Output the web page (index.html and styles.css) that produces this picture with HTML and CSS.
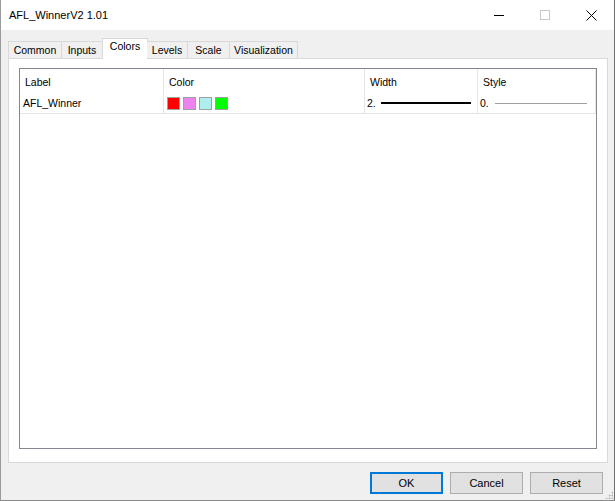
FILE: index.html
```html
<!DOCTYPE html>
<html lang="en">
<head>
    <meta charset="UTF-8">
    <title>AFL_WinnerV2 1.01</title>
    <link rel="stylesheet" href="styles.css">
</head>
<body>

<div class="window">
    <div class="titlebar">
        <span class="title">AFL_WinnerV2 1.01</span>
        <div class="controls">
            <span class="ctl"><svg width="10" height="10" viewBox="0 0 10 10"><line x1="0" y1="5.5" x2="10" y2="5.5" stroke="#000" stroke-width="1"/></svg></span>
            <span class="ctl"><svg width="10" height="10" viewBox="0 0 10 10"><rect x="0.5" y="0.5" width="9" height="9" fill="none" stroke="#c8c8c8" stroke-width="1"/></svg></span>
            <span class="ctl"><svg width="11" height="11" viewBox="0 0 11 11"><path d="M0.5 0.5 L10.5 10.5 M10.5 0.5 L0.5 10.5" stroke="#000" stroke-width="1"/></svg></span>
        </div>
    </div>

    <div class="content">
        <div class="tabs">
            <div class="tab">Common</div>
            <div class="tab">Inputs</div>
            <div class="tab active">Colors</div>
            <div class="tab">Levels</div>
            <div class="tab">Scale</div>
            <div class="tab">Visualization</div>
        </div>

        <div class="panel">
            <div class="listview">
                <div class="lv-row lv-head">
                    <div class="cell">Label</div>
                    <div class="cell">Color</div>
                    <div class="cell">Width</div>
                    <div class="cell">Style</div>
                </div>
                <div class="lv-row lv-item">
                    <div class="cell">AFL_Winner</div>
                    <div class="cell swatches">
                        <span class="swatch" style="background:#ff0000"></span>
                        <span class="swatch" style="background:#ee82ee"></span>
                        <span class="swatch" style="background:#afeeee"></span>
                        <span class="swatch" style="background:#00ff00"></span>
                    </div>
                    <div class="cell line-cell"><span>2.</span><span class="line thick"></span></div>
                    <div class="cell line-cell"><span>0.</span><span class="line thin"></span></div>
                </div>
            </div>
        </div>

        <div class="buttons">
            <button class="btn default">OK</button>
            <button class="btn">Cancel</button>
            <button class="btn">Reset</button>
        </div>
        <div class="grip"></div>
    </div>
</div>

</body>
</html>
```

FILE: styles.css
```css
body {
    margin: 0;
    padding: 0;
    font-family: "Liberation Sans", Arial, sans-serif;
    font-size: 10.5px;
    color: #000;
    background: #fff;
}
.window {
    width: 615px;
    height: 501px;
    box-sizing: border-box;
    border-left: 1px solid #9a9a9a;
    border-right: 1px solid #6e6e6e;
    border-bottom: 1px solid #8a8a8a;
    display: flex;
    flex-direction: column;
}
.titlebar {
    height: 30px;
    background: #fff;
    display: flex;
    align-items: center;
    justify-content: space-between;
    padding-left: 8px;
}
.title {
    font-size: 11px;
}
.controls {
    display: flex;
    height: 30px;
}
.ctl {
    width: 46px;
    display: flex;
    align-items: center;
    justify-content: center;
}
.content {
    flex: 1;
    background: #f0f0f0;
    padding: 8px 0 0 7px;
    display: flex;
    flex-direction: column;
    position: relative;
}
.tabs {
    display: flex;
    align-items: flex-end;
    height: 20px;
    position: relative;
    z-index: 1;
}
.tab {
    height: 17px;
    box-sizing: border-box;
    border: 1px solid #d9d9d9;
    border-bottom: none;
    border-left: none;
    padding-top: 1px;
    background: #f0f0f0;
    line-height: 15px;
    text-align: center;
}
.tab:nth-child(1) { width: 54px; border-left: 1px solid #d9d9d9; }
.tab:nth-child(2) { width: 41px; }
.tab:nth-child(3) { width: 46px; }
.tab:nth-child(4) { width: 41px; }
.tab:nth-child(5) { width: 42px; }
.tab:nth-child(6) { width: 68px; }
.tab.active {
    height: 21px;
    margin-bottom: -1px;
    margin-left: -1px;
    margin-right: -1px;
    background: #fff;
    border-left: 1px solid #d9d9d9;
    padding-top: 0;
}
.panel {
    width: 600px;
    height: 405px;
    box-sizing: border-box;
    border: 1px solid #d9d9d9;
    background: #fff;
    padding: 9px 0 0 10px;
}
.listview {
    width: 578px;
    height: 381px;
    box-sizing: border-box;
    border: 1px solid #828790;
    background: #fff;
}
.lv-row {
    display: grid;
    grid-template-columns: 144px 201px 113px 118px;
}
.cell {
    border-right: 1px solid #e5e5e5;
    padding-left: 5px;
    display: flex;
    align-items: center;
    white-space: nowrap;
}
.lv-head {
    height: 24px;
}
.lv-head .cell {
    padding-top: 2px;
}
.lv-item {
    height: 20px;
    border-bottom: 1px solid #e5e5e5;
}
.lv-item .cell:first-child {
    padding-left: 3px;
}
.swatches {
    gap: 3px;
    padding-left: 3px;
}
.swatch {
    width: 11px;
    height: 11px;
    border: 1px solid #a0a0a0;
}
.line-cell {
    padding-left: 2px;
}
.line {
    display: block;
}
.line.thick {
    width: 90px;
    height: 2px;
    background: #000;
    margin-left: 5px;
}
.line.thin {
    width: 92px;
    height: 1px;
    background: #a0a0a0;
    margin-left: 6px;
}
.buttons {
    display: flex;
    justify-content: flex-end;
    gap: 7px;
    margin-top: 9px;
    padding-right: 11px;
}
.btn {
    width: 73px;
    height: 22px;
    box-sizing: border-box;
    border: 1px solid #adadad;
    background: #e1e1e1;
    font-family: inherit;
    font-size: 11px;
    padding: 0;
    color: #000;
}
.btn.default {
    border: 2px solid #0078d7;
}
.grip {
    position: absolute;
    right: 1px;
    bottom: 1px;
    width: 8px;
    height: 8px;
    background: radial-gradient(circle, #b8b8b8 45%, transparent 50%) 0 0 / 3px 3px;
    clip-path: polygon(100% 0, 100% 100%, 0 100%);
}
```
